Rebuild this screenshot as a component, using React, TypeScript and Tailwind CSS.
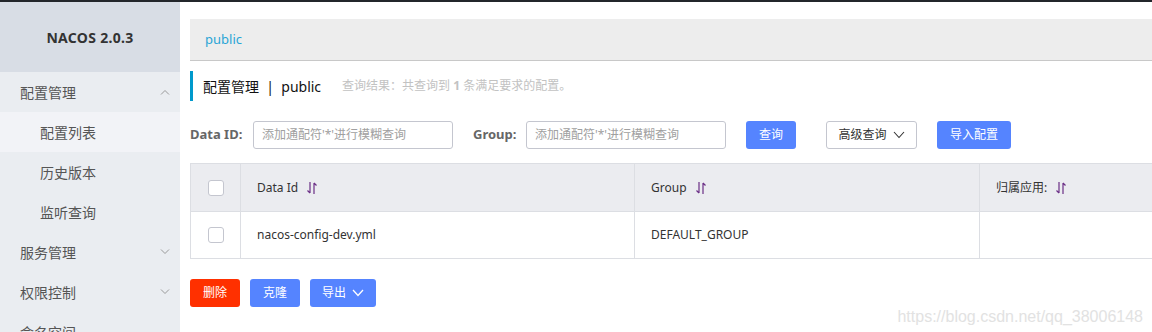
import React from "react";

const font = { fontFamily: '"Noto Sans", "Noto Sans CJK SC", sans-serif' };

const Chevron = ({ up = false, className = "" }: { up?: boolean; className?: string }) => (
  <svg width="10" height="6" viewBox="0 0 10 6" className={className}>
    <path d={up ? "M1 5.5 L5 1.5 L9 5.5" : "M1 0.5 L5 4.5 L9 0.5"} fill="none" stroke="currentColor" strokeWidth="1" />
  </svg>
);

const SortIcon = () => (
  <svg width="12" height="14" viewBox="0 0 12 14" className="ml-2 text-[#6b2f86]">
    <path d="M4 1 V12 M1.5 9.5 L4 12" fill="none" stroke="currentColor" strokeWidth="1.2" />
    <path d="M8 13 V2 M8 2 L10.5 4.5" fill="none" stroke="currentColor" strokeWidth="1.2" />
  </svg>
);

const Checkbox = () => <div className="w-4 h-4 rounded-[3px] border border-[#c4c6cf] bg-white" />;

const MenuItem = ({ label, sub, active, chevron }: { label: string; sub?: boolean; active?: boolean; chevron?: "up" | "down" }) => (
  <div className={`h-10 shrink-0 flex items-center justify-between pr-[10px] text-[14px] text-[#555] ${sub ? "pl-10" : "pl-5"} ${active ? "bg-[#f2f3f7]" : ""}`}>
    <span>{label}</span>
    {chevron && <Chevron up={chevron === "up"} className="text-[#999]" />}
  </div>
);

export default function App() {
  return (
    <div className="w-[1152px] h-[332px] overflow-hidden bg-white border-t-2 border-[#23262b] flex flex-row" style={font}>
      <div className="w-[180px] shrink-0 bg-[#eaedf1] flex flex-col overflow-hidden">
        <div className="h-[70px] shrink-0 bg-[#d8dde5] flex items-center justify-center">
          <span className="text-[14px] font-bold text-[#333] tracking-[0.3px]">NACOS 2.0.3</span>
        </div>
        <MenuItem label="配置管理" chevron="up" />
        <MenuItem label="配置列表" sub active />
        <MenuItem label="历史版本" sub />
        <MenuItem label="监听查询" sub />
        <MenuItem label="服务管理" chevron="down" />
        <MenuItem label="权限控制" chevron="down" />
        <MenuItem label="命名空间" />
      </div>

      <div className="flex-1 min-w-0 pl-[10px] flex flex-col">
        <div className="w-[1200px] shrink-0 mt-[17px] h-[42px] bg-[#ededed] border-b border-[#c8c8c8] flex items-center pl-[15px]">
          <span className="text-[13px] text-[#2aa5d6]">public</span>
        </div>

        <div className="mt-[10px] shrink-0 h-[30px] border-l-[3px] border-[#0099cc] flex items-center pl-[10px]">
          <span className="text-[14px] text-[#111]">配置管理&nbsp;&nbsp;|&nbsp;&nbsp;public</span>
          <span className="ml-[21px] text-[12px] text-[#c2c2c2]">
            查询结果：共查询到 <b className="font-bold">1</b> 条满足要求的配置。
          </span>
        </div>

        <div className="mt-[20px] shrink-0 h-[28px] flex items-center">
          <span className="text-[13px] font-bold text-[#666] w-[63px]">Data ID:</span>
          <div className="w-[200px] h-[28px] border border-[#c4c6cf] rounded-[3px] flex items-center pl-[8px] text-[12px] text-[#a0a0a0]">
            添加通配符'*'进行模糊查询
          </div>
          <span className="ml-[20px] text-[13px] font-bold text-[#666] w-[53px]">Group:</span>
          <div className="w-[200px] h-[28px] border border-[#c4c6cf] rounded-[3px] flex items-center pl-[8px] text-[12px] text-[#a0a0a0]">
            添加通配符'*'进行模糊查询
          </div>
          <button className="ml-[20px] w-[50px] h-[28px] rounded-[3px] bg-[#5584ff] text-white text-[12px]">查询</button>
          <button className="ml-[30px] w-[91px] h-[28px] rounded-[3px] border border-[#c4c6cf] bg-white text-[#333] text-[12px] flex items-center justify-center gap-[6px]">
            高级查询
            <svg width="12" height="8" viewBox="0 0 12 8"><path d="M1 1 L6 6.5 L11 1" fill="none" stroke="#333" strokeWidth="1.1" /></svg>
          </button>
          <button className="ml-[20px] w-[74px] h-[28px] rounded-[3px] bg-[#5584ff] text-white text-[12px]">导入配置</button>
        </div>

        <div className="mt-[14px] shrink-0 w-[1000px] border border-[#dcdee3] border-r-0">
          <div className="h-[48px] bg-[#ebecf0] flex border-b border-[#dcdee3] text-[12px] text-[#333]">
            <div className="w-[50px] flex items-center justify-center border-r border-[#dcdee3]"><Checkbox /></div>
            <div className="w-[394px] flex items-center pl-4 border-r border-[#dcdee3]">Data Id<SortIcon /></div>
            <div className="w-[345px] flex items-center pl-4 border-r border-[#dcdee3]">Group<SortIcon /></div>
            <div className="flex-1 flex items-center pl-4">归属应用:<SortIcon /></div>
          </div>
          <div className="h-[46px] flex text-[12px] text-[#333]">
            <div className="w-[50px] flex items-center justify-center border-r border-[#dcdee3]"><Checkbox /></div>
            <div className="w-[394px] flex items-center pl-4 border-r border-[#dcdee3]">nacos-config-dev.yml</div>
            <div className="w-[345px] flex items-center pl-4 border-r border-[#dcdee3]">DEFAULT_GROUP</div>
            <div className="flex-1" />
          </div>
        </div>

        <div className="mt-[20px] shrink-0 flex items-start justify-between pr-[9px]">
          <div className="flex gap-[10px]">
            <button className="w-[50px] h-[28px] rounded-[3px] bg-[#ff3000] text-white text-[12px]">删除</button>
            <button className="w-[50px] h-[28px] rounded-[3px] bg-[#5584ff] text-white text-[12px]">克隆</button>
            <button className="w-[66px] h-[28px] rounded-[3px] bg-[#5584ff] text-white text-[12px] flex items-center justify-center gap-[6px]">
              导出
              <svg width="12" height="8" viewBox="0 0 12 8"><path d="M1 1 L6 6.5 L11 1" fill="none" stroke="#fff" strokeWidth="1.3" /></svg>
            </button>
          </div>
          <span className="mt-[26px] text-[16px] text-[#e2e2e2]" style={{ fontFamily: '"Liberation Sans", Arial, sans-serif' }}>
            https://blog.csdn.net/qq_38006148
          </span>
        </div>
      </div>
    </div>
  );
}
